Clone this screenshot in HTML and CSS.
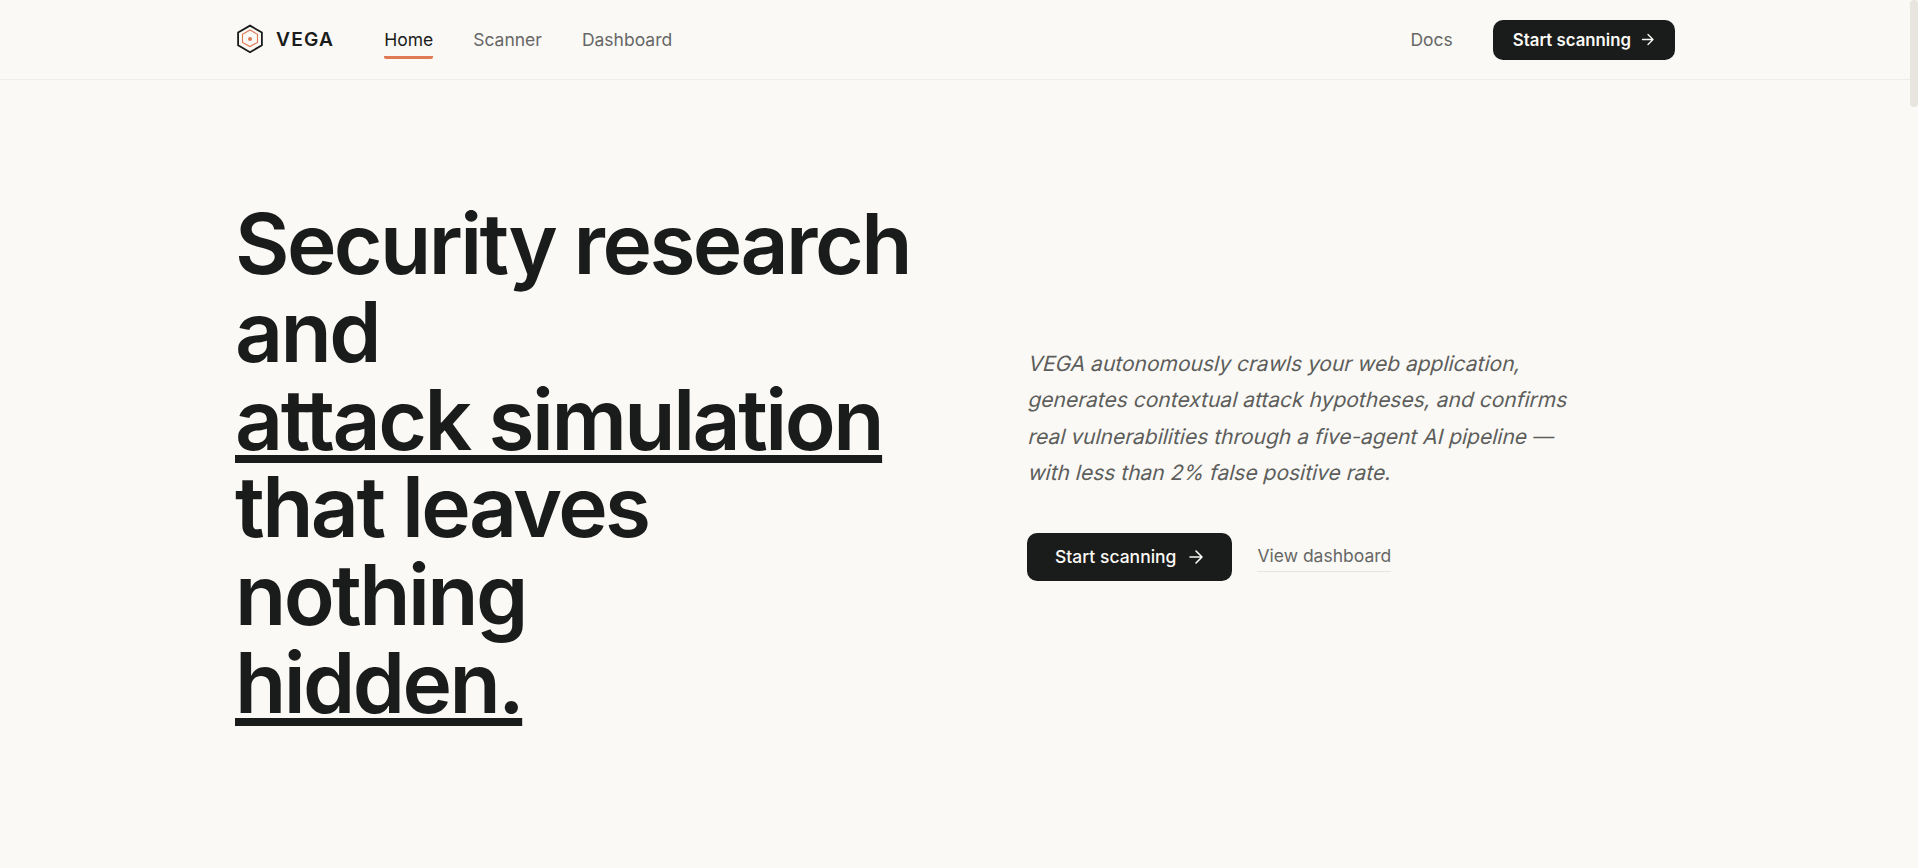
FILE: index.html
```
<!DOCTYPE html>
<html lang="en">
<head>
  <meta charset="UTF-8" />
  <title>VEGA</title>
  <meta name="viewport" content="width=device-width, initial-scale=1.0" />
  <link rel="stylesheet" href="styles.css">
</head>
<body>

  <header class="navbar">
    <div class="container nav-inner">
      <a class="brand" href="#">
        <svg class="brand-logo" viewBox="0 0 30 30" fill="none">
          <path d="M15 1.6L26.9 8.5V21.2L15 28.2L3.1 21.2V8.5Z" stroke="#1a1c1b" stroke-width="1.8" />
          <path d="M15 6L22.5 10.3V18.4L15 22.6L7.5 18.4V10.3Z" stroke="#e07a55" stroke-width="1.1" />
          <circle cx="15" cy="15" r="2" fill="#e07a55" />
        </svg>
        <span>VEGA</span>
      </a>
      <nav class="nav-links">
        <a class="nav-link active" href="#">Home</a>
        <a class="nav-link" href="#">Scanner</a>
        <a class="nav-link" href="#">Dashboard</a>
      </nav>
      <div class="nav-right">
        <a class="nav-link" href="#">Docs</a>
        <a class="btn btn-small" href="#">
          Start scanning
          <svg class="arrow" viewBox="0 0 14 14" fill="none" stroke="currentColor" stroke-width="1.3" stroke-linecap="round" stroke-linejoin="round">
            <path d="M1.5 6.5H12M7 1.5L12 6.5L7 11.5" />
          </svg>
        </a>
      </div>
    </div>
  </header>

  <!-- Hero -->
  <main class="container hero">
    <h1 class="hero-title">Security research and<br><span class="underlined wide">attack simulation</span><br>that leaves nothing<br><span class="underlined">hidden.</span></h1>
    <div class="hero-side">
      <p class="hero-text">
        <span class="slanted">VEGA autonomously crawls your web application,</span>
        <span class="slanted">generates contextual attack hypotheses, and confirms</span>
        <span class="slanted">real vulnerabilities through a five-agent AI pipeline —</span>
        <span class="slanted">with less than 2% false positive rate.</span>
      </p>
      <div class="hero-actions">
        <a class="btn btn-large" href="#">
          Start scanning
          <svg class="arrow" viewBox="0 0 16 16" fill="none" stroke="currentColor" stroke-width="1.6" stroke-linecap="round" stroke-linejoin="round">
            <path d="M2 8H14M8 2L14 8L8 14" />
          </svg>
        </a>
        <a class="text-link" href="#">View dashboard</a>
      </div>
    </div>
  </main>

  <div class="scroll-thumb"></div>

</body>
</html>
```

FILE: styles.css
```
* {
  box-sizing: border-box;
}

body {
  margin: 0;
  height: 100vh;
  padding-right: 8px;
  overflow: hidden;
  background-color: #faf9f5;
  color: #1a1c1b;
  font-family: Inter, sans-serif;
}

a {
  color: inherit;
  text-decoration: none;
}

.container {
  width: 1440px;
  margin: 0 auto;
}

/* Navbar */
.navbar {
  height: 80px;
  border-bottom: 1px solid #eeede9;
}

.nav-inner {
  display: flex;
  align-items: center;
  height: 79px;
}

.brand {
  display: flex;
  align-items: center;
  gap: 11px;
  height: 30px;
  margin: 0 50px 2px 0;
  font-size: 19.2px;
  font-weight: 600;
  letter-spacing: 1.2px;
}

.brand-logo {
  width: 30px;
  height: 30px;
}

.nav-links {
  display: flex;
  gap: 40px;
}

.nav-link {
  padding: 8px 0 4px;
  border-bottom: 3px solid transparent;
  border-radius: 2px;
  color: #666766;
  font-size: 17.5px;
  line-height: 24px;
}

.nav-link.active {
  color: #1a1c1b;
  border-bottom-color: #e07a55;
}

.nav-right {
  display: flex;
  align-items: center;
  gap: 40px;
  margin-left: auto;
}

.btn {
  display: flex;
  align-items: center;
  background-color: #1a1c1b;
  color: #faf9f5;
}

.btn-small {
  height: 40px;
  gap: 10px;
  padding: 0 20px;
  border-radius: 10px;
  font-size: 16.8px;
  font-weight: 600;
}

.btn-small .arrow {
  width: 14px;
  height: 14px;
}

/* Hero */
.hero {
  display: grid;
  grid-template-columns: 696px 1fr;
  gap: 96px;
  align-items: center;
  padding-top: 120px;
}

.hero-title {
  margin: 0;
  font-size: 83.8px;
  font-weight: 600;
  line-height: 87.8px;
  letter-spacing: -0.031em;
}

.underlined {
  text-decoration: underline;
  text-decoration-thickness: 7.5px;
  text-underline-offset: 5px;
  text-decoration-skip-ink: none;
}

.underlined.wide {
  letter-spacing: -0.0297em;
}

.hero-text {
  margin: 0 0 41px;
  color: #5d5e5c;
  font-size: 21px;
  line-height: 36.5px;
}

.slanted {
  display: block;
  transform: skewX(-14deg);
  transform-origin: 0 70%;
}

.hero-actions {
  display: flex;
  align-items: center;
  gap: 25px;
}

.btn-large {
  height: 48px;
  gap: 12px;
  padding: 0 28px;
  border-radius: 10px;
  font-size: 17.5px;
  font-weight: 500;
}

.btn-large .arrow {
  width: 16px;
  height: 16px;
}

.text-link {
  margin-top: 3px;
  padding-bottom: 5px;
  border-bottom: 1px solid #e6e4de;
  color: #666766;
  font-size: 17.5px;
}

/* Scrollbar */
.scroll-thumb {
  position: fixed;
  top: 0;
  right: 0;
  width: 8px;
  height: 107px;
  border-radius: 4px;
  background-color: #e7e5de;
}
```
